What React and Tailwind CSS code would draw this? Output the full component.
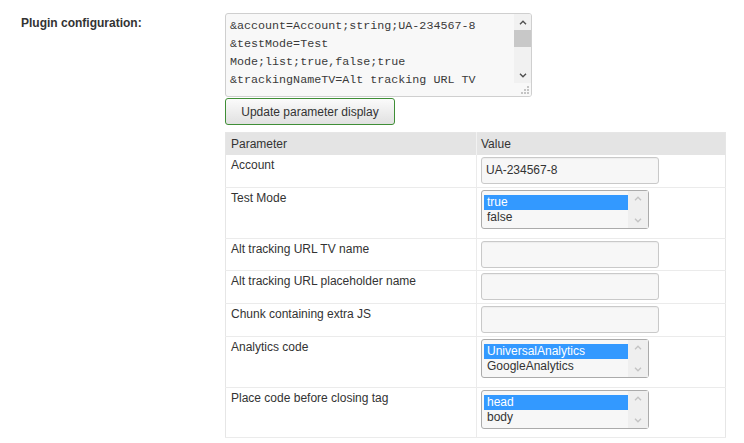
import React from 'react';

const Chevron = ({ up, className }) => (
  <svg viewBox="0 0 8 5" className={className} fill="none" stroke="currentColor" strokeWidth="1.4">
    <path d={up ? 'M1 4.2 L4 1.2 L7 4.2' : 'M1 0.8 L4 3.8 L7 0.8'} />
  </svg>
);

const TextInput = ({ value = '' }) => (
  <div className="w-[178px] h-[27px] border border-[#c9c9c9] rounded-[3px] bg-[#f7f7f7] shadow-[inset_0_1px_1px_rgba(0,0,0,0.04)] px-[4px] flex items-center text-[12px] text-[#333]">
    {value}
  </div>
);

const ListBox = ({ options }) => (
  <div className="w-[168px] h-[39px] border border-[#ababab] rounded-[3px] bg-[#f7f7f7] flex">
    <div className="flex-1 pl-[2px] pt-[4px]">
      {options.map((o, i) => (
        <div
          key={o}
          className={
            'h-[15px] leading-[15px] pl-[3px] text-[12px] ' +
            (i === 0 ? 'bg-[#3399ff] text-white' : 'text-[#333]')
          }
        >
          {o}
        </div>
      ))}
    </div>
    <div className="w-[20px] bg-[#efefef] flex flex-col items-center justify-between py-[5px] text-[#c4c4c4]">
      <Chevron up className="w-[8px] h-[5px]" />
      <Chevron className="w-[8px] h-[5px]" />
    </div>
  </div>
);

const rows = [
  { label: 'Account', h: 'h-[33px]', field: <TextInput value="UA-234567-8" /> },
  { label: 'Test Mode', h: 'h-[51px]', field: <ListBox options={['true', 'false']} /> },
  { label: 'Alt tracking URL TV name', h: 'h-[32px]', field: <TextInput /> },
  { label: 'Alt tracking URL placeholder name', h: 'h-[33px]', field: <TextInput /> },
  { label: 'Chunk containing extra JS', h: 'h-[33px]', field: <TextInput /> },
  { label: 'Analytics code', h: 'h-[51px]', field: <ListBox options={['UniversalAnalytics', 'GoogleAnalytics']} /> },
  { label: 'Place code before closing tag', h: 'h-[50px]', field: <ListBox options={['head', 'body']} /> },
];

const lines = [
  '&account=Account;string;UA-234567-8',
  '&testMode=Test',
  'Mode;list;true,false;true',
  '&trackingNameTV=Alt tracking URL TV',
];

export default function App() {
  return (
    <div className="w-[744px] h-[443px] bg-white flex font-['Liberation_Sans',Arial,sans-serif] text-[#333]">
      {/* label column */}
      <div className="w-[225px] pl-[21px] pt-[10px]">
        <span className="text-[12px] font-bold leading-[15px] text-[#333]">Plugin configuration:</span>
      </div>

      {/* field column */}
      <div className="pt-[13px] flex flex-col">
        {/* textarea */}
        <div className="w-[307px] h-[84px] border border-[#cfcfcf] rounded-[3px] bg-[#f8f8f8] flex overflow-hidden relative">
          <div className="flex-1 pl-[4px] pt-[3px] font-['Liberation_Mono','Courier_New',monospace] text-[11.7px] leading-[18px] text-[#3a3a3a] whitespace-pre overflow-hidden">
            {lines.map((l) => (
              <div key={l}>{l}</div>
            ))}
          </div>
          <div className="w-[17px] flex flex-col">
            <div className="h-[69px] bg-[#f1f1f1] flex flex-col items-center">
              <div className="h-[16px] flex items-center justify-center text-[#505050]">
                <Chevron up className="w-[8px] h-[5px]" />
              </div>
              <div className="w-full h-[17px] bg-[#c8c8c8]" />
              <div className="flex-1" />
              <div className="h-[16px] flex items-center justify-center text-[#505050]">
                <Chevron className="w-[8px] h-[5px]" />
              </div>
            </div>
            <div className="flex-1 bg-[#f8f8f8]" />
          </div>
          <svg className="absolute right-[2px] bottom-[2px] w-[9px] h-[9px]" viewBox="0 0 9 9">
            <rect x="7" y="1" width="2" height="2" fill="#c4c4c4" />
            <rect x="4" y="4" width="2" height="2" fill="#c4c4c4" />
            <rect x="7" y="4" width="2" height="2" fill="#c4c4c4" />
            <rect x="1" y="7" width="2" height="2" fill="#c4c4c4" />
            <rect x="4" y="7" width="2" height="2" fill="#c4c4c4" />
            <rect x="7" y="7" width="2" height="2" fill="#c4c4c4" />
          </svg>
        </div>

        {/* button */}
        <button className="mt-[1px] w-[170px] h-[27px] border border-[#3f8e36] rounded-[3px] bg-gradient-to-b from-[#fbfbfb] to-[#e1e1e1] text-[12px] text-[#333] font-['Liberation_Sans',Arial,sans-serif]">
          Update parameter display
        </button>

        {/* parameter table */}
        <table className="mt-[7px] w-[500px] border-collapse border border-[#e6e6e6] text-[12px] text-[#333] table-fixed">
          <colgroup>
            <col className="w-[251px]" />
            <col className="w-[249px]" />
          </colgroup>
          <thead>
            <tr className="h-[22px] bg-[#e4e4e4]">
              <th className="text-left font-normal pl-[5px] border-r border-[#f2f2f2] align-middle">Parameter</th>
              <th className="text-left font-normal pl-[4px] align-middle">Value</th>
            </tr>
          </thead>
          <tbody>
            {rows.map((r) => (
              <tr key={r.label} className={r.h + ' border-b border-[#ebebeb]'}>
                <td className="align-top pl-[5px] pt-[3px] leading-[14px] border-r border-[#ebebeb]">{r.label}</td>
                <td className="align-top pl-[4px] pt-[2px]">{r.field}</td>
              </tr>
            ))}
          </tbody>
        </table>
      </div>
    </div>
  );
}
